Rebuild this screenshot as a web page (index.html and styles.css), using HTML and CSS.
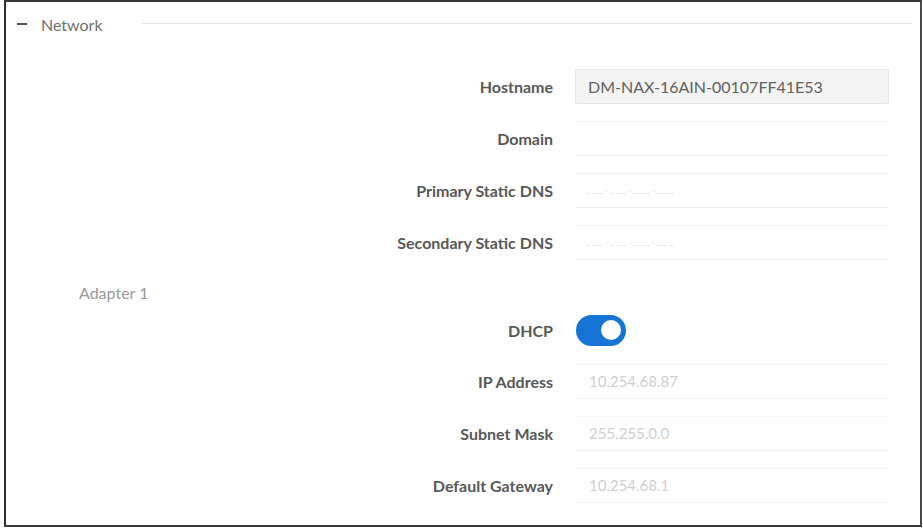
FILE: index.html
```html
<!DOCTYPE html>
<html lang="en">
<head>
<meta charset="utf-8">
<title>Network</title>
<link rel="stylesheet" href="styles.css">
</head>
<body>
<div class="frame">
  <div class="section-head">
    <span class="collapse-icon"></span>
    <span class="section-title">Network</span>
    <span class="section-rule"></span>
  </div>
  <div class="form">
    <div class="row">
      <label class="label">Hostname</label>
      <div class="field filled">DM-NAX-16AIN-00107FF41E53</div>
    </div>
    <div class="row">
      <label class="label">Domain</label>
      <div class="field"></div>
    </div>
    <div class="row">
      <label class="label">Primary Static DNS</label>
      <div class="field"><span class="mask">___.___.___.___</span></div>
    </div>
    <div class="row">
      <label class="label">Secondary Static DNS</label>
      <div class="field"><span class="mask">___.___.___.___</span></div>
    </div>
    <div class="subhead">Adapter 1</div>
    <div class="row row-toggle">
      <label class="label">DHCP</label>
      <div class="toggle on"><span class="knob"></span></div>
    </div>
    <div class="row">
      <label class="label">IP Address</label>
      <div class="field disabled">10.254.68.87</div>
    </div>
    <div class="row">
      <label class="label">Subnet Mask</label>
      <div class="field disabled">255.255.0.0</div>
    </div>
    <div class="row">
      <label class="label">Default Gateway</label>
      <div class="field disabled">10.254.68.1</div>
    </div>
  </div>
</div>
</body>
</html>
```

FILE: styles.css
```css
html, body {
  margin: 0;
  padding: 0;
  background: #ffffff;
}
body {
  font-family: Lato, "Open Sans", "Liberation Sans", sans-serif;
  width: 923px;
  height: 528px;
  overflow: hidden;
}
.frame {
  box-sizing: border-box;
  margin-left: 4px;
  width: 918px;
  height: 527px;
  border-top: 2px solid #3a3a3a;
  border-left: 2px solid #2e2e2e;
  border-right: 2px solid #4a4a4a;
  border-bottom: 2px solid #3a3a3a;
  background: #fff;
}
.section-head {
  display: flex;
  align-items: center;
  height: 44px;
  padding-left: 11px;
  padding-right: 8px;
}
.collapse-icon {
  width: 10px;
  height: 2px;
  background: #555;
  flex: none;
}
.section-title {
  margin-left: 14px;
  font-size: 16px;
  color: #707070;
  flex: none;
}
.section-rule {
  flex: 1;
  height: 1px;
  background: #e6e6e6;
  margin-left: 38px;
  margin-top: -2px;
}
.form {
  padding-top: 14px;
}
.row {
  display: flex;
  align-items: center;
  height: 52px;
}
.label {
  width: 547px;
  flex: none;
  box-sizing: border-box;
  text-align: right;
  font-size: 16px;
  font-weight: 700;
  color: #585858;
  padding-top: 1px;
}
.field {
  box-sizing: border-box;
  margin-left: 22px;
  width: 314px;
  height: 35px;
  border-top: 1px solid #f0f0f0;
  border-bottom: 1px solid #ececec;
  padding-left: 14px;
  display: flex;
  align-items: center;
  font-size: 15px;
  color: #666;
}
.field.filled {
  background: #f4f4f4;
  border: 1px solid #e6e6e6;
  border-radius: 2px;
  padding-left: 12px;
  font-size: 16px;
  color: #606060;
}
.field.disabled {
  color: #cfcfcf;
  border-top-color: #f5f5f5;
  border-bottom-color: #f2f2f2;
}
.mask {
  font-size: 11px;
  color: #e0e0e0;
  letter-spacing: 1.5px;
  margin-top: -6px;
  margin-left: -4px;
}
.subhead {
  height: 42px;
  box-sizing: border-box;
  padding-top: 16px;
  padding-left: 73px;
  font-size: 16px;
  line-height: 18px;
  color: #999;
}
.row-toggle {
  height: 40px;
  margin-bottom: 5px;
}
.toggle {
  margin-left: 23px;
  width: 50px;
  height: 31px;
  border-radius: 16px;
  background: #1674d6;
  display: flex;
  align-items: center;
  justify-content: flex-end;
  box-sizing: border-box;
  padding-right: 5px;
}
.knob {
  width: 20px;
  height: 20px;
  border-radius: 50%;
  background: #fff;
}
```
